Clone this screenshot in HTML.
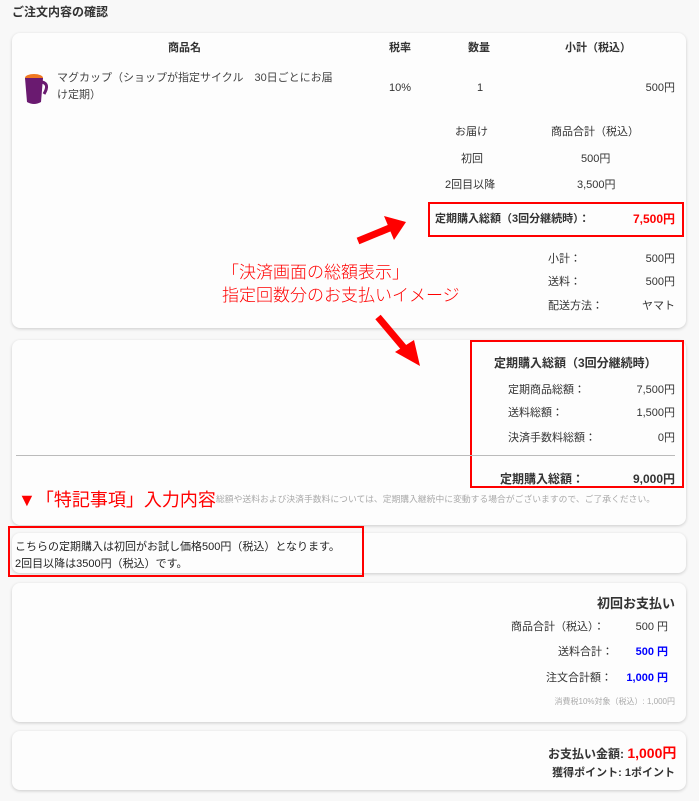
<!DOCTYPE html>
<html><head><meta charset="utf-8"><style>
*{margin:0;padding:0;box-sizing:border-box}
body{width:699px;height:801px;background:#f8f8f8;font-family:"Liberation Sans","Noto Sans CJK JP",sans-serif;color:#333;position:relative;overflow:hidden;font-size:11px}
.a{position:absolute;white-space:nowrap;line-height:1}
.card{position:absolute;left:12px;width:674px;background:#fdfdfd;border-radius:8px;box-shadow:0 1px 3px rgba(0,0,0,.18)}
.r{text-align:right}
.b{font-weight:bold}
.red{color:#f00}
.box{position:absolute;border:2px solid #f00}
</style></head><body>
<div class="a b" style="left:12px;top:6px;font-size:12px">ご注文内容の確認</div>
<div class="card" style="top:33px;height:295px"></div>
<div class="card" style="top:340px;height:185px"></div>
<div class="card" style="top:533px;height:40px"></div>
<div class="card" style="top:583px;height:139px"></div>
<div class="card" style="top:731px;height:59px"></div>

<div class="a b" style="left:168px;top:43px">商品名</div>
<div class="a b" style="left:389px;top:43px">税率</div>
<div class="a b" style="left:468px;top:43px">数量</div>
<div class="a b" style="left:565px;top:43px">小計（税込）</div>
<svg class="a" style="left:22px;top:70px" width="28" height="36" viewBox="0 0 28 36"><ellipse cx="12" cy="8" rx="9" ry="4" fill="#f07820"/><path d="M3 8 L5 32 Q12 36 19 32 L21 8 Z" fill="#6a1a70"/><path d="M20 12 Q28 14 22 24" stroke="#6a1a70" stroke-width="3" fill="none"/></svg>
<div class="a" style="left:57px;top:70px;line-height:17px;color:#444">マグカップ（ショップが指定サイクル　30日ごとにお届<br>け定期）</div>
<div class="a" style="left:389px;top:83px">10%</div>
<div class="a" style="left:477px;top:83px">1</div>
<div class="a r" style="right:24px;top:83px">500円</div>
<div class="a" style="left:455px;top:127px">お届け</div>
<div class="a" style="left:551px;top:127px">商品合計（税込）</div>
<div class="a" style="left:461px;top:154px">初回</div>
<div class="a" style="left:581px;top:154px">500円</div>
<div class="a" style="left:445px;top:180px">2回目以降</div>
<div class="a" style="left:577px;top:180px">3,500円</div>
<div class="box" style="left:428px;top:202px;width:256px;height:35px"></div>
<div class="a b" style="left:435px;top:214px">定期購入総額（3回分継続時）：</div>
<div class="a b red" style="right:24px;top:213px;font-size:12px">7,500円</div>
<div class="a" style="left:548px;top:254px">小計：</div><div class="a" style="right:24px;top:254px">500円</div>
<div class="a" style="left:548px;top:277px">送料：</div><div class="a" style="right:24px;top:277px">500円</div>
<div class="a" style="left:548px;top:301px">配送方法：</div><div class="a" style="right:24px;top:301px">ヤマト</div>
<div class="a red" style="left:222px;top:261px;font-size:17px;line-height:23px;font-weight:300">「決済画面の総額表示」<br>指定回数分のお支払いイメージ</div>
<svg class="a" style="left:0;top:0" width="699" height="801"><line x1="358" y1="241" x2="392" y2="227" stroke="#f00" stroke-width="7"/><polygon points="384,216 406,222 394,240" fill="#f00"/><line x1="378" y1="317" x2="405" y2="349" stroke="#f00" stroke-width="7"/><polygon points="395,352 420,366 414,340" fill="#f00"/></svg>

<div class="box" style="left:470px;top:340px;width:214px;height:148px"></div>
<div class="a b" style="left:494px;top:357px;font-size:12px">定期購入総額（3回分継続時）</div>
<div class="a" style="left:508px;top:385px">定期商品総額：</div><div class="a" style="right:24px;top:385px">7,500円</div>
<div class="a" style="left:508px;top:408px">送料総額：</div><div class="a" style="right:24px;top:408px">1,500円</div>
<div class="a" style="left:508px;top:433px">決済手数料総額：</div><div class="a" style="right:24px;top:433px">0円</div>
<div class="a" style="left:16px;top:455px;width:659px;height:1px;background:#bbb"></div>
<div class="a b" style="left:500px;top:473px;font-size:12px">定期購入総額：</div><div class="a b" style="right:24px;top:473px;font-size:12px">9,000円</div>
<div class="a red" style="left:18px;top:491px;font-size:18px">▼「特記事項」入力内容</div>
<div class="a" style="left:216px;top:495px;font-size:8.8px;color:#aaa">総額や送料および決済手数料については、定期購入継続中に変動する場合がございますので、ご了承ください。</div>

<div class="box" style="left:8px;top:526px;width:356px;height:51px"></div>
<div class="a" style="left:15px;top:539px;line-height:17px;color:#222">こちらの定期購入は初回がお試し価格500円（税込）となります。<br>2回目以降は3500円（税込）です。</div>

<div class="a b" style="right:24px;top:597px;font-size:13px">初回お支払い</div>
<div class="a" style="left:511px;top:622px">商品合計（税込）：</div><div class="a" style="right:31px;top:622px">500 円</div>
<div class="a" style="left:558px;top:647px">送料合計：</div><div class="a b" style="right:31px;top:647px;color:#00f">500 円</div>
<div class="a" style="left:546px;top:673px">注文合計額：</div><div class="a b" style="right:31px;top:673px;color:#00f">1,000 円</div>
<div class="a" style="right:24px;top:698px;font-size:8px;color:#aaa">消費税10%対象（税込）: 1,000円</div>

<div class="a b" style="left:548px;top:746px;font-size:12px">お支払い金額: <span class="red" style="font-size:14px">1,000円</span></div>
<div class="a b" style="right:24px;top:768px;font-size:11px">獲得ポイント: 1ポイント</div>
</body></html>
